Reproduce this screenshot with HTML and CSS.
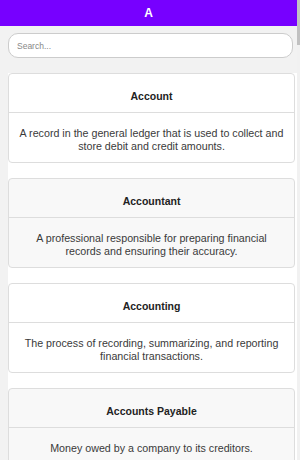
FILE: index.html
```html
<!DOCTYPE html>
<html lang="en">
<head>
    <meta charset="UTF-8">
    <meta name="viewport" content="width=device-width, initial-scale=1.0">
    <title>Glossary - A</title>
    <link rel="stylesheet" href="styles.css">
</head>
<body>
    <div class="page">
        <div class="header">A</div>
        <input type="text" class="search" id="search" placeholder="Search...">
        <div class="list" id="list"></div>
    </div>
    <div class="scrollbar"><div class="thumb"></div></div>

    <script>
        const terms = [
            ['Account', 'A record in the general ledger that is used to collect and store debit and credit amounts.'],
            ['Accountant', 'A professional responsible for preparing financial records and ensuring their accuracy.'],
            ['Accounting', 'The process of recording, summarizing, and reporting financial transactions.'],
            ['Accounts Payable', 'Money owed by a company to its creditors.'],
            ['Accounts Receivable', 'Money owed to a company by its customers for goods or services delivered.'],
            ['Accounting Cycle', 'The series of steps used to record and process transactions in a period.'],
            ['Accounting Equation', 'Assets equal liabilities plus owners\' equity.'],
            ['Accounting Period', 'The span of time covered by a set of financial statements.'],
            ['Accounting Policies', 'The rules and practices a company follows when preparing its reports.'],
            ['Accrual', 'An amount recorded for revenue earned or expense incurred but not yet settled.'],
            ['Accrual Basis', 'An accounting method that records revenues and expenses when they are incurred.'],
            ['Accrued Expense', 'An expense that has been incurred but not yet paid.'],
            ['Accrued Revenue', 'Revenue that has been earned but not yet received in cash.'],
            ['Accumulated Depreciation', 'The total depreciation recorded on an asset since it was acquired.'],
            ['Acid-Test Ratio', 'A measure of a company\'s ability to pay current liabilities with its most liquid assets.'],
            ['Acquisition', 'The purchase of one company by another.'],
            ['Activity-Based Costing', 'A method that assigns overhead costs to products based on activities.'],
            ['Additional Paid-In Capital', 'Money received from investors above the par value of shares.'],
            ['Adjusting Entry', 'A journal entry made at the end of a period to update account balances.'],
            ['Adverse Opinion', 'An audit opinion stating that statements are not fairly presented.'],
            ['After-Tax Income', 'Net income remaining after all taxes have been deducted.'],
            ['Aging Schedule', 'A report that groups receivables by how long they have been outstanding.'],
            ['Allocation', 'The assignment of costs to departments, products or periods.'],
            ['Allowance for Doubtful Accounts', 'An estimate of receivables that are not expected to be collected.'],
            ['Amortization', 'The gradual write-off of an intangible asset\'s cost over its useful life.'],
            ['Amortization Schedule', 'A table showing each loan payment split into principal and interest.'],
            ['Analytical Review', 'An audit procedure that compares financial data to spot unusual changes.'],
            ['Annual Report', 'A yearly document describing a company\'s activities and financial performance.'],
            ['Annuity', 'A series of equal payments made at regular intervals.'],
            ['Appreciation', 'An increase in the value of an asset over time.'],
            ['Appropriation', 'An amount set aside from earnings for a specific purpose.'],
            ['Arm\'s Length Transaction', 'A deal between unrelated parties acting in their own interest.'],
            ['Arrears', 'Payments that are overdue or made at the end of a period.'],
            ['Articles of Incorporation', 'The legal document that creates a corporation.'],
            ['Assessed Value', 'The value of a property set by a government for tax purposes.'],
            ['Asset', 'A resource owned by a company that is expected to provide future benefit.'],
            ['Asset Impairment', 'A drop in an asset\'s value below the amount recorded on the books.'],
            ['Asset Turnover', 'A ratio that measures how efficiently assets are used to generate sales.'],
            ['Attestation', 'A report by an accountant that gives an opinion on a claim made by another party.'],
            ['Audit', 'An independent examination of financial statements and records.'],
            ['Audit Trail', 'A record that traces each transaction back to its source documents.'],
            ['Auditor', 'A person who examines and verifies the accuracy of financial records.'],
            ['Authorized Shares', 'The maximum number of shares a corporation may issue.'],
            ['Average Cost', 'An inventory method that uses the weighted average cost of all units.']
        ];

        function render(filter) {
            const q = filter.trim().toLowerCase();
            let html = '';
            for (const [term, text] of terms) {
                if (q && !term.toLowerCase().includes(q)) continue;
                html += `
                    <div class="card">
                        <h3>${term}</h3>
                        <p>${text}</p>
                    </div>
                `;
            }
            document.getElementById('list').innerHTML = html;
        }

        document.getElementById('search').addEventListener('input', e => render(e.target.value));
        render('');
    </script>
</body>
</html>
```

FILE: styles.css
```css
body {
    margin: 0;
    background: #f2f2f2;
    font-family: "Liberation Sans", Arial, sans-serif;
    color: #333;
}
.page {
    margin-right: 3px;
}
/* thin scrollbar strip on the right edge */
.scrollbar {
    position: fixed;
    top: 0;
    right: 0;
    bottom: 0;
    width: 3px;
    background: #f1f1f1;
}
.thumb {
    height: 45px;
    background: #c1c1c1;
}
.header {
    height: 26px;
    line-height: 27px;
    background: #7700ff;
    color: #fff;
    font-weight: bold;
    font-size: 12px;
    text-align: center;
}
.search {
    display: block;
    box-sizing: border-box;
    width: 285px;
    height: 25px;
    margin: 7px 0 0 8px;
    padding: 0 8px;
    border: 1px solid #ccc;
    border-radius: 10px;
    background: #fff;
    font-family: inherit;
    font-size: 8.5px;
    outline: none;
}
.search::placeholder {
    color: #888;
}
.list {
    margin: 15px 0 0 8px;
    background: #fff;
}
.card {
    margin: 0 2px 15px 0;
    border: 1px solid #ddd;
    border-radius: 4px;
    background: #fff;
}
.card:nth-child(even) {
    background: #f8f8f8;
}
.card h3 {
    margin: 0;
    padding: 16px 8px 9px;
    border-bottom: 1px solid #ddd;
    font-size: 10.5px;
    line-height: 13px;
    color: #222;
    text-align: center;
}
.card p {
    margin: 0;
    padding: 14px 8px 9px;
    font-size: 10.7px;
    line-height: 13px;
    color: #3a3a3a;
    text-align: center;
}
```
